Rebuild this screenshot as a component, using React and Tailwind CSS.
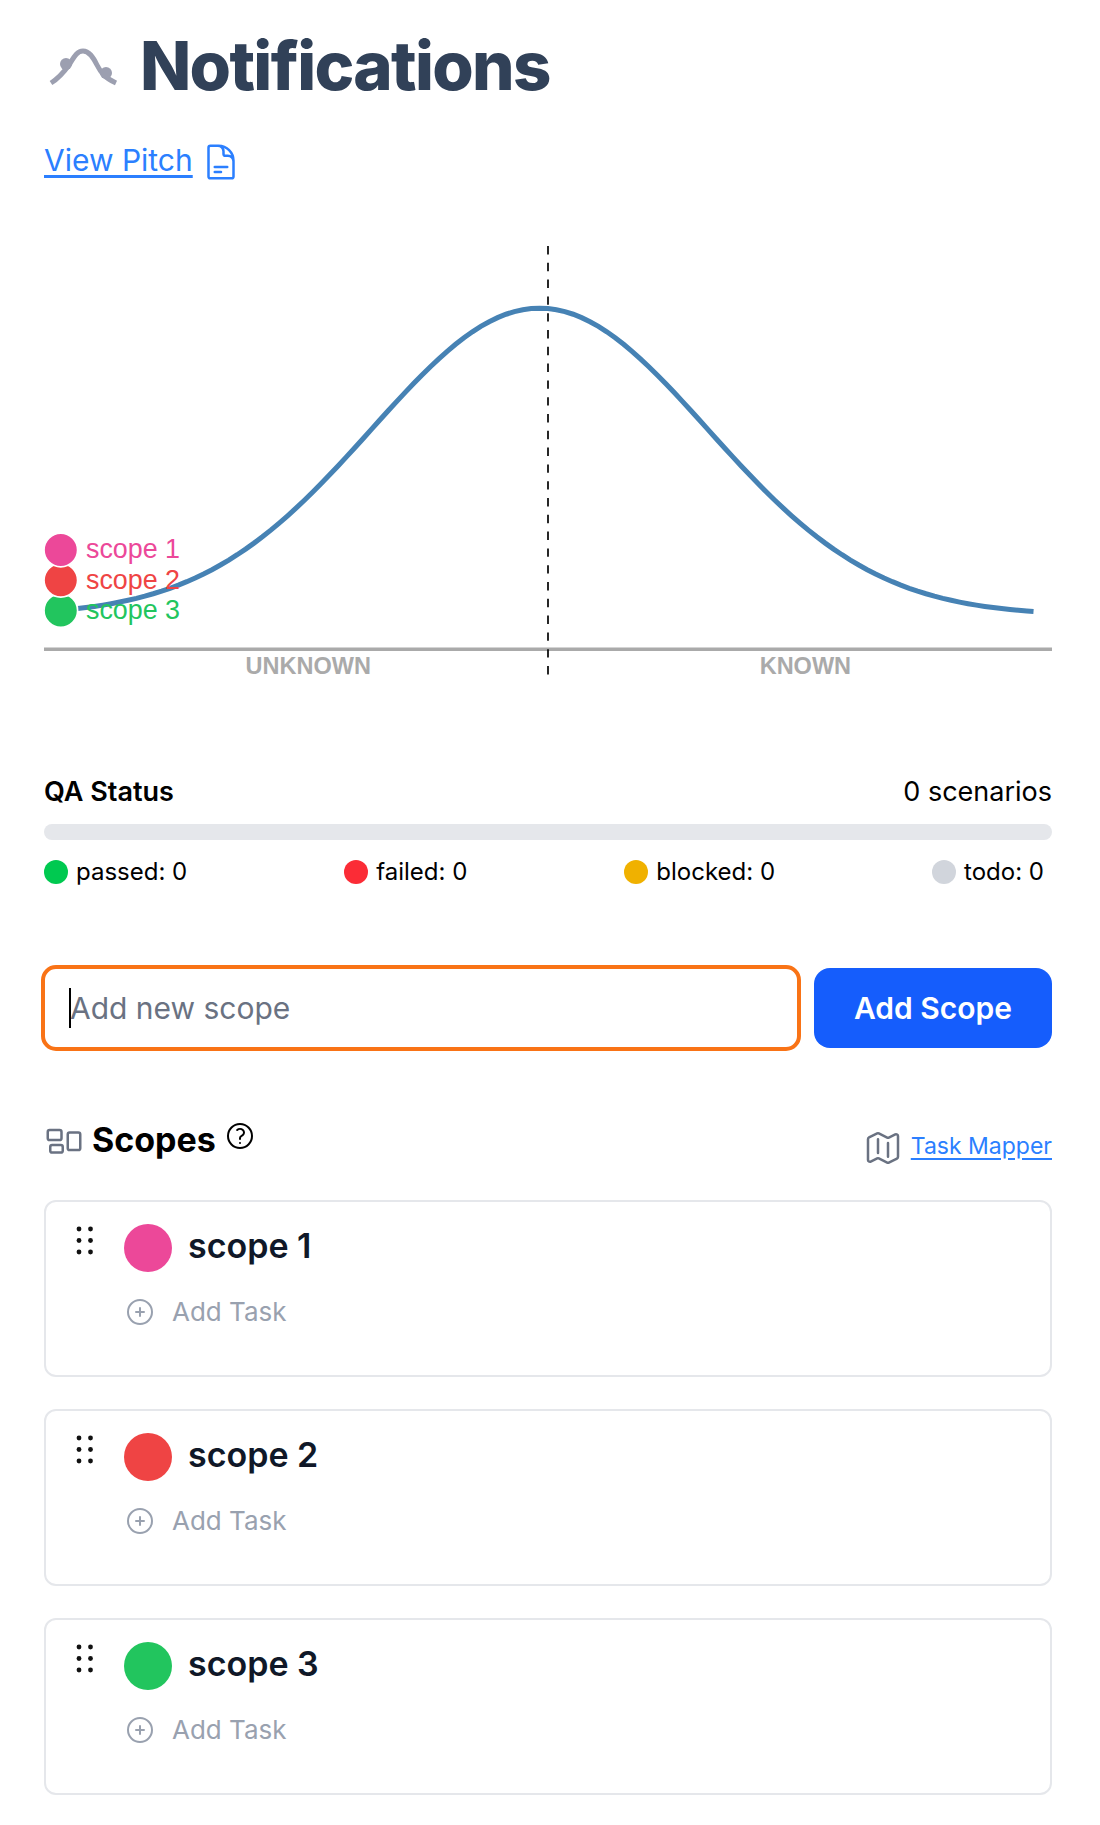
import {
  HiOutlineDocumentText,
  HiOutlineMap,
  HiOutlinePlusCircle,
  HiOutlineQuestionMarkCircle,
  HiOutlineRectangleGroup,
} from "react-icons/hi2";

const scopes = [
  { name: "scope 1", fill: "fill-[#ec4899]", bg: "bg-[#ec4899]", y: 181 },
  { name: "scope 2", fill: "fill-[#ef4444]", bg: "bg-[#ef4444]", y: 199 },
  { name: "scope 3", fill: "fill-[#22c55e]", bg: "bg-[#22c55e]", y: 217 },
];

const statuses = [
  { label: "passed", count: 0, bg: "bg-[#00c950]" },
  { label: "failed", count: 0, bg: "bg-[#fb2c36]" },
  { label: "blocked", count: 0, bg: "bg-[#f0b100]" },
  { label: "todo", count: 0, bg: "bg-[#d1d5dc]" },
];

// Bell curve sampled every five units along the chart.
const curve = Array.from({ length: 119 }, (_, i) => {
  const x = Math.min(i * 5, 589);
  const y = 220 - 183 * Math.exp(-((x - 295) ** 2) / 20000);
  return `${i === 0 ? "M" : "L"}${x} ${y.toFixed(2)}`;
}).join("");

function HillIcon() {
  return (
    <svg viewBox="0 0 80 80" className="size-20 shrink-0 text-[#9c9fb0]" aria-hidden="true">
      <path
        d="M7 59C15 54 20 48 25 41C30 33 33 27 39 27C45 27 49 33 53 41C57 49 61 54 72 59"
        fill="none"
        stroke="currentColor"
        strokeWidth="5"
      />
      <circle cx="22" cy="40" r="6" fill="currentColor" />
      <circle cx="62" cy="49" r="6" fill="currentColor" />
    </svg>
  );
}

function HillChart() {
  return (
    <svg viewBox="0 0 600 256" className="mt-16 w-full overflow-visible" role="img" aria-label="Hill chart">
      <path d={curve} fill="none" stroke="#4682b4" strokeWidth="3" />
      <line x1="0" x2="600" y1="240" y2="240" stroke="#aaaaaa" strokeWidth="2" />
      <line x1="300" x2="300" y1="0" y2="256" stroke="black" strokeWidth="1" strokeDasharray="5 5" />
      <g className="fill-[#aaaaaa] font-['Liberation_Sans',sans-serif] text-[14px] font-bold">
        <text x="120" y="255">UNKNOWN</text>
        <text x="426" y="255">KNOWN</text>
      </g>
      {[...scopes].reverse().map((s) => (
        <g key={s.name} className={s.fill}>
          <circle cx="10" cy={s.y} r="10" stroke="white" strokeWidth="1" />
          <text x="25" y={s.y + 5} className="font-['Liberation_Sans',sans-serif] text-[16px]">
            {s.name}
          </text>
        </g>
      ))}
    </svg>
  );
}

function DragHandle() {
  return (
    <button type="button" aria-label="Drag to reorder" className="mt-5 cursor-grab">
      <svg viewBox="0 0 20 32" className="h-8 w-5" fill="#111111">
        {[5, 16.5, 28].map((y) => (
          <g key={y}>
            <circle cx="3" cy={y} r="2.4" />
            <circle cx="14.5" cy={y} r="2.4" />
          </g>
        ))}
      </svg>
    </button>
  );
}

function ScopeCard({ scope }) {
  return (
    <li className="flex items-start gap-7 rounded-xl border-2 border-[#e5e7eb] pt-0.5 pb-[43px] pl-[30px]">
      <DragHandle />
      <div className="pt-5">
        <div className="flex items-center gap-4">
          <span className={`size-12 rounded-full ${scope.bg}`} />
          <h3 className="pb-1 text-[34px] leading-10 font-semibold text-[#101828]">{scope.name}</h3>
        </div>
        <button type="button" className="mt-5 flex items-center gap-4 text-[26px] leading-10 text-[#99a1af]">
          <HiOutlinePlusCircle className="size-8" />
          Add Task
        </button>
      </div>
    </li>
  );
}

export default function App() {
  return (
    <main className="bg-white pt-6 pr-12 pb-8 pl-11 font-[Inter,sans-serif] text-black">
      <header className="flex items-center gap-4">
        <HillIcon />
        <h1 className="pt-1 text-[67px] leading-19 font-extrabold tracking-tight text-[#314158]">Notifications</h1>
      </header>

      <a href="#pitch" className="mt-9 flex w-fit items-start gap-2 text-[30px] leading-10 text-[#2b7fff]">
        <span className="underline underline-offset-4">View Pitch</span>
        <HiOutlineDocumentText className="mt-0.5 size-10" />
      </a>

      <HillChart />

      <section className="mt-24">
        <div className="flex justify-between text-[27px] leading-10">
          <h2 className="font-semibold">QA Status</h2>
          <span>0 scenarios</span>
        </div>
        <div className="mt-3 h-4 rounded-full bg-[#e5e7eb]" />
        <ul className="mt-4 flex justify-between text-[24px] leading-8">
          {statuses.map((s) => (
            <li key={s.label} className="flex items-center gap-2 pr-2">
              <span className={`size-6 rounded-full ${s.bg}`} />
              {s.label}: {s.count}
            </li>
          ))}
        </ul>
      </section>

      <form className="mt-20 flex gap-4" onSubmit={(e) => e.preventDefault()}>
        <div className="relative h-20 grow">
          <input
            type="text"
            aria-label="Add new scope"
            placeholder="Add new scope"
            className="size-full rounded-xl pl-[26px] text-[30px] outline-4 -outline-offset-1 outline-[#f97316] placeholder:text-[#6a7282]"
          />
          <span className="absolute top-5 left-[25px] h-10 w-0.5 bg-black" />
        </div>
        <button type="submit" className="h-20 rounded-2xl bg-[#155dfc] px-10 text-[30px] font-semibold text-white">
          Add Scope
        </button>
      </form>

      <section className="mt-16">
        <div className="flex justify-between">
          <div className="flex items-start gap-2 pt-2">
            <HiOutlineRectangleGroup className="size-10 text-[#6a7282]" />
            <h2 className="text-[34px] leading-10 font-bold">Scopes</h2>
            <button type="button" aria-label="About scopes">
              <HiOutlineQuestionMarkCircle className="size-8" />
            </button>
          </div>
          <a href="#mapper" className="flex items-start gap-2 pt-4 text-[#2b7fff]">
            <HiOutlineMap className="size-10 text-[#6a7282]" />
            <span className="text-[23px] leading-9 underline underline-offset-4">Task Mapper</span>
          </a>
        </div>
        <ul className="mt-8 grid gap-8">
          {scopes.map((s) => (
            <ScopeCard key={s.name} scope={s} />
          ))}
        </ul>
      </section>
    </main>
  );
}
